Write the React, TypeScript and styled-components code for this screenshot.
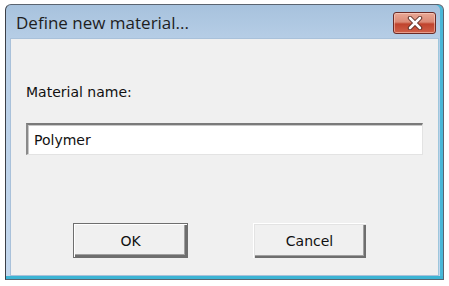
import React from "react";
import styled, { createGlobalStyle } from "styled-components";

const GlobalStyle = createGlobalStyle`
  html, body {
    margin: 0;
    padding: 0;
    background: #ffffff;
  }
  body {
    font-family: "DejaVu Sans", "Liberation Sans", sans-serif;
  }
`;

const Page = styled.div`
  padding: 4px 0 0 5px;
`;

const Window = styled.div`
  width: 437px;
  height: 274px;
  border: 1px solid #5a6470;
  border-left-color: #3c4048;
  border-radius: 6px 6px 0 0;
  background: linear-gradient(180deg, #a7c2dd 0%, #b8cfe7 14%, #c4d8ee 100%);
  box-shadow: inset 0 -3px 0 #3cb4d4, inset -3px 0 0 #49b8d8;
  display: flex;
  flex-direction: column;
`;

const TitleBar = styled.div`
  height: 33px;
  display: flex;
  align-items: center;
  justify-content: space-between;
  padding: 0 7px 0 10px;
`;

const Title = styled.span`
  font-family: "Open Sans", "Noto Sans", sans-serif;
  font-size: 17px;
  color: #1e1e1e;
  margin-top: 1px;
`;

const CloseButton = styled.div`
  width: 41px;
  height: 20px;
  border: 1px solid #6b2b26;
  border-radius: 3px;
  background: linear-gradient(
    180deg,
    #e9a896 0%,
    #db8a76 45%,
    #c0432d 55%,
    #d0614a 100%
  );
  box-shadow: inset 0 0 0 1px rgba(255, 220, 210, 0.5);
  display: flex;
  align-items: center;
  justify-content: center;
  margin-top: 2px;
`;

const Client = styled.div`
  flex: 1;
  margin: 0 4px 3px 4px;
  background: #f0f0f0;
  border: 1px solid #a9c1da;
  border-right-color: #9ec6dc;
  padding: 44px 15px 0 15px;
  display: flex;
  flex-direction: column;
  font-family: "DejaVu Sans", "Liberation Sans", sans-serif;
  color: #111;
`;

const Label = styled.div`
  font-size: 14px;
  line-height: 18px;
`;

const TextBox = styled.div`
  margin-top: 22px;
  height: 29px;
  background: #ffffff;
  border-style: solid;
  border-width: 2px 1px 1px 2px;
  border-color: #7a7a7a #e3e3e3 #e3e3e3 #8a8a8a;
  box-shadow: inset 1px 1px 0 #c8c8c8;
  display: flex;
  align-items: center;
  padding-left: 6px;
  font-size: 14px;
`;

const ButtonRow = styled.div`
  margin-top: 68px;
  padding-left: 47px;
  display: flex;
  gap: 65px;
`;

const Button = styled.div<{ $default?: boolean }>`
  width: ${(p) => (p.$default ? "115px" : "113px")};
  height: 35px;
  box-sizing: border-box;
  background: #f0f0f0;
  border: ${(p) => (p.$default ? "1px solid #6e6e6e" : "none")};
  box-shadow: ${(p) =>
    p.$default
      ? "inset 1px 1px 0 #ffffff, inset -2px -2px 0 #6e6e6e, inset -3px -3px 0 #a0a0a0"
      : "inset 1px 1px 0 #ffffff, inset 2px 2px 0 #e3e3e3, inset -2px -2px 0 #6e6e6e, inset -3px -3px 0 #a0a0a0"};
  display: flex;
  align-items: center;
  justify-content: center;
  font-size: 14px;
`;

export default function App() {
  return (
    <>
      <GlobalStyle />
      <Page>
        <Window>
          <TitleBar>
            <Title>Define new material...</Title>
            <CloseButton>
              <svg width="18" height="14" viewBox="0 0 18 14">
                <path
                  d="M4 2 L14 12 M14 2 L4 12"
                  stroke="#5a2a22"
                  strokeWidth="4.4"
                  strokeLinecap="round"
                />
                <path
                  d="M4 2 L14 12 M14 2 L4 12"
                  stroke="#ffffff"
                  strokeWidth="2.6"
                  strokeLinecap="round"
                />
              </svg>
            </CloseButton>
          </TitleBar>
          <Client>
            <Label>Material name:</Label>
            <TextBox>Polymer</TextBox>
            <ButtonRow>
              <Button $default>OK</Button>
              <Button>Cancel</Button>
            </ButtonRow>
          </Client>
        </Window>
      </Page>
    </>
  );
}
